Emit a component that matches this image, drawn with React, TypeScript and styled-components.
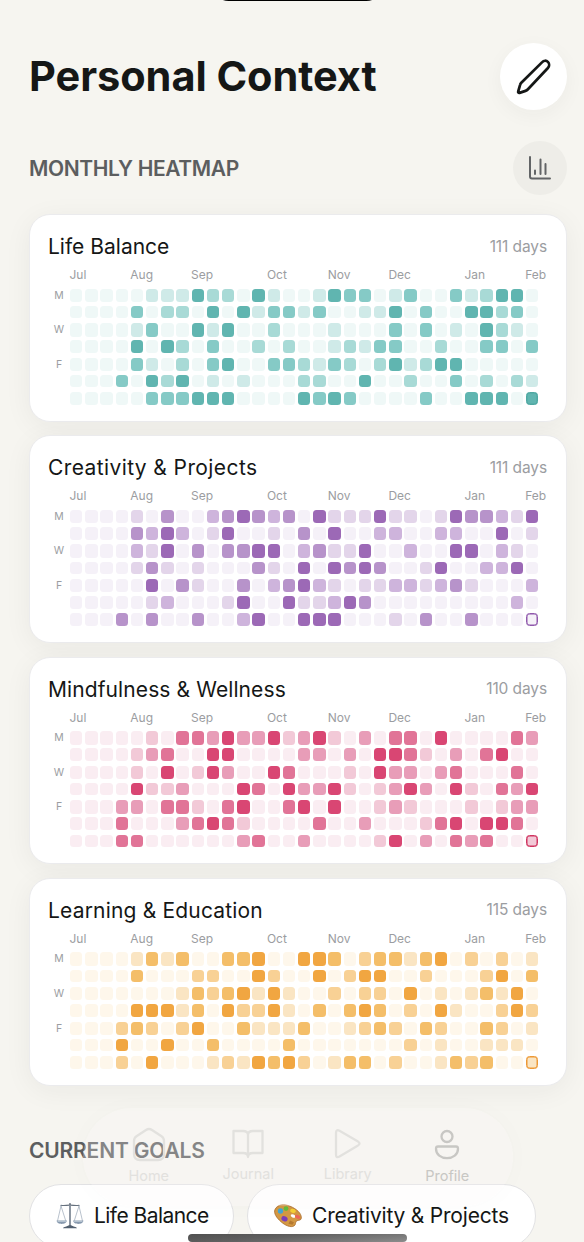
import React from "react"
import styled, { createGlobalStyle } from "styled-components"

const MONTHS = [
  { label: "Jul", col: 1 },
  { label: "Aug", col: 5 },
  { label: "Sep", col: 9 },
  { label: "Oct", col: 14 },
  { label: "Nov", col: 18 },
  { label: "Dec", col: 22 },
  { label: "Jan", col: 27 },
  { label: "Feb", col: 31 }
]

const WEEKDAYS = ["M", "", "W", "", "F", "", ""]

// one string per weekday, one digit (0-4) per week
const CARDS = [
  {
    title: "Life Balance",
    tracking: 0,
    days: 111,
    colors: ["#eff8f7", "#cfeae8", "#a8dad6", "#85cac6", "#60b5b0"],
    today: "#4fa8a2",
    rows: [
      "0000011142204100143301300312440",
      "0000302204041331300114030044230",
      "0000130041400200010003030104210",
      "0000404203002020012133002003303",
      "0000310203400332132024124400000",
      "0003042401010002200400200302021",
      "0000033344400004343000030044404"
    ]
  },
  {
    title: "Creativity & Projects",
    tracking: 0.4,
    days: 111,
    colors: ["#f5f1f8", "#e3d5ea", "#ceb4dc", "#b793ca", "#9c69b6"],
    today: "#9059ac",
    rows: [
      "0000103002343230411141101433214",
      "0000324201400103040022002200401",
      "0000214030334402311400200440210",
      "0000131010003104043430014002240",
      "0000040310030234210112212310002",
      "0000012000140041124300000000020",
      "0003030030024004440001030030000"
    ]
  },
  {
    title: "Mindfulness & Wellness",
    tracking: 0.1,
    days: 110,
    colors: ["#faedf2", "#f2c9d7", "#e89db8", "#e17497", "#d94673"],
    today: "#d03460",
    rows: [
      "0000010332422412410203304000032",
      "0000123004400002202044310203400",
      "0000104014200430001042202300030",
      "0000411200043042241012420410324",
      "0002203310340034040012100010122",
      "0003000234310000300200013404430",
      "0003300000023002000014020323001"
    ]
  },
  {
    title: "Learning & Education",
    tracking: 0.18,
    days: 115,
    colors: ["#fef7eb", "#fae5c3", "#f8d195", "#f4be69", "#f1a641"],
    today: "#ed9936",
    rows: [
      "0000131300334004430233134020201",
      "0000300022004200402440020002403",
      "0000000132341410020220401013140",
      "0000444130422410303430204100242",
      "0002320240031113001232032003201",
      "0004004003000030000000201001110",
      "0002040001214342013302001323001"
    ]
  }
]

const ScalesIcon = () => (
  <svg width="28" height="28" viewBox="0 0 28 28" fill="none">
    <g stroke="#66717e" strokeWidth="1" strokeLinecap="round">
      <path d="M5 3.300c3 .6 5.500-.1 9-.1s6 .7 9 .1" strokeWidth="1.200" />
      <path d="M5 4 1.500 19M5 4l4.800 15M23 4l-4.800 15M23 4l3.500 15" stroke="#9ba8b7" strokeWidth=".7" />
      <path d="M14 2v22" strokeWidth="1.800" />
      <path d="M14 3v20" stroke="#c6d0da" strokeWidth=".6" />
    </g>
    <path d="M.6 18.600h10.200c-.5 2.800-2.600 3.300-5.100 3.300S1 21.400.6 18.600ZM17.200 18.600h10.200c-.5 2.800-2.600 3.300-5.100 3.300s-4.700-.5-5.100-3.300Z" fill="#8799ae" />
    <path d="M1.500 19.300h8.500M18 19.300h8.500" stroke="#d9e2eb" strokeWidth=".7" />
    <path d="M7 26.200c.5-1.700 4-1.500 5.800-3h2.400c1.800 1.500 5.300 1.300 5.800 3Z" fill="#526070" />
  </svg>
)

const PaletteIcon = () => (
  <svg width="28" height="24" viewBox="0 0 28 24">
    <path
      d="M1 5.500C3.500.2 10-.2 16 2.200c6 2.400 11.800 7 11.300 12-.3 2.600-3 1.500-4.800 2.800-1.500 1.200-.3 3.700-2.600 5-3.100 1.800-8.800-.5-12.900-4.300C2.700 14-.6 9.200 1 5.500Z"
      fill="#d39843"
      stroke="#a96a28"
      strokeWidth=".8"
    />
    <ellipse cx="19" cy="12" rx="2.400" ry="1.500" fill="#fff" transform="rotate(22 19 12)" />
    <circle cx="6.500" cy="7" r="2.700" fill="#43a5d3" />
    <circle cx="12" cy="4.600" r="2.400" fill="#63bc3c" />
    <ellipse cx="19" cy="6.900" rx="2.800" ry="2" fill="#f4ce35" transform="rotate(20 19 6.900)" />
    <ellipse cx="23.600" cy="12.800" rx="2.800" ry="1.800" fill="#ee6557" transform="rotate(24 23.600 12.800)" />
    <ellipse cx="10.500" cy="14.800" rx="3.200" ry="2.500" fill="#7b3db9" transform="rotate(25 10.500 14.800)" />
    <path d="m16 16.500 4 1.800-1.500 2.500-4-1Z" fill="#b57930" />
  </svg>
)

const App = () => {
  return (
    <Screen>
      <GlobalStyle />
      <Island />
      <Header>
        <Title>Personal Context</Title>
        <EditButton>
          <svg width="38" height="38" viewBox="0 0 38 38" fill="none" stroke="#151716" strokeWidth="2.700" strokeLinejoin="round">
            <path d="M27.200 4.100c1.600-1.800 4.100-1.800 5.700-.2s1.600 4.300 0 6.100L12.700 31.500c-.7.800-1.300 1.100-2.200 1.400l-6 2c-.9.300-1.600-.4-1.300-1.400l1.900-6.700c.2-.8.600-1.400 1.200-2Z" />
          </svg>
        </EditButton>
      </Header>
      <SectionHeader>
        <SectionTitle>MONTHLY HEATMAP</SectionTitle>
        <ChartButton>
          <svg width="24" height="27" viewBox="0 0 24 27" fill="none" stroke="#626466" strokeWidth="2" strokeLinecap="round" strokeLinejoin="round">
            <path d="M2 2v19.500q0 2 2 2h18M7 15.500v3.500M12.500 4.500V19M17.500 9v10" />
          </svg>
        </ChartButton>
      </SectionHeader>
      <CardList>
        {CARDS.map((card) => (
          <Card key={card.title}>
            <CardHeader>
              <CardTitle $tracking={card.tracking}>{card.title}</CardTitle>
              <Days>{card.days} days</Days>
            </CardHeader>
            <Months>
              {MONTHS.map((m) => (
                <Month key={m.label} $col={m.col}>{m.label}</Month>
              ))}
            </Months>
            <Heatmap>
              {card.rows.map((row, r) => (
                <Week key={r}>
                  <Weekday>{WEEKDAYS[r]}</Weekday>
                  {row.split("").map((level, c) => (
                    <Cell
                      key={c}
                      $color={card.colors[+level]}
                      $today={r === 6 && c === 30 ? card.today : undefined}
                    />
                  ))}
                </Week>
              ))}
            </Heatmap>
          </Card>
        ))}
      </CardList>
      <GoalsTitle>CURRENT GOALS</GoalsTitle>
      <Goals>
        <Goal $width={205} $tracking={-0.55}>
          <ScalesIcon />
          <span>Life Balance</span>
        </Goal>
        <Goal $width={289} $tracking={-0.2}>
          <PaletteIcon />
          <span>Creativity &amp; Projects</span>
        </Goal>
      </Goals>
      <TabBar>
        <Tab>
          <svg width="34" height="36" viewBox="0 0 34 36">
            <path d="M2 14q0-3 2.500-4.700L14 3q3-2 6 0l9.500 6.300Q32 11 32 14v13q0 6-6 6H8q-6 0-6-6Z" />
          </svg>
          <TabLabel>Home</TabLabel>
        </Tab>
        <Tab $raised>
          <svg width="34" height="32" viewBox="0 0 34 32">
            <path d="M17 7q0-4-5-4H2.500v22H12q5 0 5 4 0-4 5-4h9.500V3H22q-5 0-5 4Zm0 0v22" />
          </svg>
          <TabLabel>Journal</TabLabel>
        </Tab>
        <Tab $raised>
          <svg width="30" height="32" viewBox="0 0 30 32">
            <path d="M3 5q0-4 3.500-2.200L25 13.600q3 1.900 0 3.800L6.500 28.500Q3 30.500 3 26.500Z" />
          </svg>
          <TabLabel>Library</TabLabel>
        </Tab>
        <Tab $active>
          <svg width="28" height="34" viewBox="0 0 28 34">
            <circle cx="14" cy="8.500" r="5.500" />
            <path d="M5 18.500h18q2 0 2 2.200c0 6-5 9.500-11 9.500S3 26.700 3 20.700q0-2.200 2-2.200Z" />
          </svg>
          <TabLabel>Profile</TabLabel>
        </Tab>
      </TabBar>
      <HomeIndicator />
    </Screen>
  )
}

const GlobalStyle = createGlobalStyle`
  * {
    box-sizing: border-box;
  }
  body {
    margin: 0;
    overflow: hidden;
    background: #f6f5f0;
    font-family: Inter, "Liberation Sans", sans-serif;
  }
`

const Screen = styled.div`
  position: relative;
  width: 584px;
  height: 1242px;
  overflow: hidden;
  background: #f6f5f0;
  color: #151716;
`

const Island = styled.div`
  position: absolute;
  top: -30px;
  left: 213px;
  width: 169px;
  height: 31px;
  border-radius: 18px;
  background: #000;
`

const Header = styled.header`
  display: flex;
  justify-content: space-between;
  align-items: center;
  height: 67px;
  margin: 43px 17px 0 29px;
`

const Title = styled.h1`
  margin: 0;
  padding-bottom: 1px;
  font-size: 41.5px;
  font-weight: 700;
  line-height: 50px;
  letter-spacing: -0.05px;
  white-space: nowrap;
`

const EditButton = styled.button`
  display: flex;
  align-items: center;
  justify-content: center;
  width: 67px;
  height: 67px;
  padding: 0;
  border: 0;
  border-radius: 50%;
  background: #fff;
  box-shadow: 0 5px 20px rgba(40, 40, 50, 0.045);
`

const SectionHeader = styled.div`
  display: flex;
  justify-content: space-between;
  align-items: center;
  height: 54px;
  margin: 31px 17px 0 29px;
`

const SectionTitle = styled.h2`
  margin: 2px 0 0;
  font-size: 21px;
  font-weight: 600;
  line-height: 26px;
  letter-spacing: -0.38px;
  color: #5c5e5f;
  white-space: nowrap;
`

const ChartButton = styled.button`
  display: flex;
  align-items: center;
  justify-content: center;
  width: 54px;
  height: 54px;
  padding: 0;
  border: 0;
  border-radius: 50%;
  background: #eeede8;
`

const CardList = styled.main`
  display: flex;
  flex-direction: column;
  gap: 13.6px;
  margin: 19px 17px 0 29px;
`

const Card = styled.section`
  height: 207.7px;
  padding: 18px 19px 0 19px;
  border: 1px solid #ebebed;
  border-radius: 21px;
  background: #fff;
  box-shadow: 0 5px 28px rgba(35, 35, 40, 0.055);
`

const CardHeader = styled.div`
  display: flex;
  justify-content: space-between;
  align-items: center;
  height: 27px;
`

const CardTitle = styled.h3<{ $tracking: number }>`
  margin: 0 0 0 -1px;
  font-size: 21px;
  font-weight: 400;
  letter-spacing: ${(props) => props.$tracking}px;
  white-space: nowrap;
`

const Days = styled.span`
  margin-top: -1px;
  font-size: 15.5px;
  letter-spacing: -0.1px;
  color: #9b9da1;
`

const Months = styled.div`
  display: grid;
  grid-template-columns: repeat(31, 12.25px);
  column-gap: 2.95px;
  height: 17px;
  margin: 6px 0 0 20.500px;
`

const Month = styled.span<{ $col: number }>`
  grid-column: ${(props) => props.$col};
  grid-row: 1;
  font-size: 12px;
  line-height: 17px;
  color: #9b9da1;
  white-space: nowrap;
`

const Heatmap = styled.div`
  display: flex;
  flex-direction: column;
  gap: 4.770px;
  margin-top: 5.6px;
`

const Week = styled.div`
  display: grid;
  grid-template-columns: 18.100px repeat(31, 12.35px);
  column-gap: 2.86px;
  height: 12.5px;
`

const Weekday = styled.span`
  padding-left: 2px;
  font-size: 10.5px;
  line-height: 13.5px;
  text-align: center;
  color: #9b9da1;
`

const Cell = styled.i<{ $color: string; $today?: string }>`
  border: ${(props) => (props.$today ? `1.5px solid ${props.$today}` : "0")};
  border-radius: 3.5px;
  background: ${(props) => props.$color};
  box-shadow: ${(props) => (props.$today ? `inset 0 0 0 0.5px ${props.$today}` : "none")};
`

const GoalsTitle = styled(SectionTitle)`
  margin: 52px 0 0 29px;
  letter-spacing: -0.18px;
`

const Goals = styled.div`
  display: flex;
  gap: 13px;
  margin: 20px 0 0 29px;
`

const Goal = styled.div<{ $width: number; $tracking: number }>`
  display: flex;
  align-items: center;
  gap: 10px;
  flex: none;
  width: ${(props) => props.$width}px;
  height: 64px;
  padding-left: 26px;
  border: 1.5px solid #e2e2e4;
  border-radius: 32px;
  background: #fff;
  font-size: 21px;
  letter-spacing: ${(props) => props.$tracking}px;
  white-space: nowrap;
`

const TabBar = styled.nav`
  position: absolute;
  top: 1108px;
  left: 83px;
  display: grid;
  grid-template-columns: repeat(4, 99.5px);
  width: 430px;
  height: 98px;
  padding: 18px 16px 0;
  border-radius: 49px;
  background: rgba(250, 249, 246, 0.26);
  box-shadow: 0 0 26px rgba(40, 40, 40, 0.018);
`

const Tab = styled.div<{ $active?: boolean; $raised?: boolean }>`
  display: flex;
  flex-direction: column;
  align-items: center;
  color: ${(props) => (props.$active ? "#c8c7c4" : "#e2e1de")};
  svg {
    height: ${(props) => (props.$raised ? 38 : 40)}px;
    margin-top: -1px;
    margin-bottom: 1px;
    fill: none;
    stroke: currentColor;
    stroke-width: 2.3;
    stroke-linejoin: round;
  }
`

const TabLabel = styled.span`
  font-size: 14.5px;
  line-height: 20px;
`

const HomeIndicator = styled.div`
  position: absolute;
  top: 1234px;
  left: 188px;
  width: 219px;
  height: 8px;
  border-radius: 4px;
  background: linear-gradient(175deg, #505050 0%, #606060 40%, #8c8c8c 100%);
`

export default App
